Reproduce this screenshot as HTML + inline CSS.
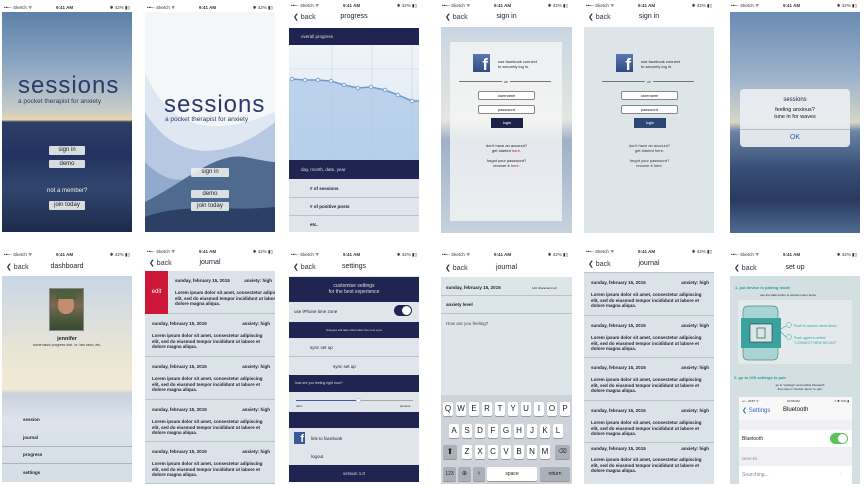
<!DOCTYPE html>
<html><head><meta charset="utf-8"><style>
*{margin:0;padding:0;box-sizing:border-box}
body{width:867px;height:486px;background:#fff;position:relative;overflow:hidden;font-family:"Liberation Sans",sans-serif;color:#222}
.a{position:absolute}
.sb{position:absolute;height:10px;font-size:4.5px;color:#333;white-space:nowrap}
.sb span{position:absolute;top:2px}
.nav{position:absolute;height:16px;background:#fff;font-size:7px;color:#334}
.nav .bk{position:absolute;left:4px;top:3px}
.nav .tt{position:absolute;left:0;right:0;top:3px;text-align:center;color:#223}
.dk{position:absolute;background:#1f2550;color:#ddd;font-size:4.5px}
.btn{position:absolute;background:rgba(235,238,235,.9);font-size:6px;text-align:center;color:#223;border-radius:1px;line-height:9px}
.t{position:absolute;white-space:nowrap}
.ent{position:absolute;left:0;right:0;border-bottom:1px solid #b9c3c8;font-size:4.5px;font-weight:bold;color:#223}
.ent .d{position:absolute;left:7px;top:7px}
.ent .x{position:absolute;right:5px;top:7px}
.ent .b{position:absolute;left:7px;top:19px;right:4px;line-height:5.5px;font-weight:bold}
.row{position:absolute;left:0;right:0;font-size:4.5px;font-weight:bold;color:#223}
.key{position:absolute;width:10px;height:14px;background:#fff;border-radius:2px;font-size:8px;text-align:center;line-height:14px;color:#222;box-shadow:0 1px 0 #999}
</style></head><body>

<div class="sb" style="left:4px;top:3px;width:128px"><span style="left:0">•••◦◦ Sketch ᯤ</span><span style="left:52px;font-weight:bold">9:41 AM</span><span style="right:2px">✱ 42% ▮▯</span></div>
<div class="sb" style="left:147px;top:3px;width:128px"><span style="left:0">•••◦◦ Sketch ᯤ</span><span style="left:52px;font-weight:bold">9:41 AM</span><span style="right:2px">✱ 42% ▮▯</span></div>
<div class="sb" style="left:291px;top:1px;width:128px"><span style="left:0">•••◦◦ Sketch ᯤ</span><span style="left:52px;font-weight:bold">9:41 AM</span><span style="right:2px">✱ 42% ▮▯</span></div>
<div class="sb" style="left:442px;top:1px;width:128px"><span style="left:0">•••◦◦ Sketch ᯤ</span><span style="left:52px;font-weight:bold">9:41 AM</span><span style="right:2px">✱ 42% ▮▯</span></div>
<div class="sb" style="left:586px;top:1px;width:128px"><span style="left:0">•••◦◦ Sketch ᯤ</span><span style="left:52px;font-weight:bold">9:41 AM</span><span style="right:2px">✱ 42% ▮▯</span></div>
<div class="sb" style="left:731px;top:1px;width:128px"><span style="left:0">•••◦◦ Sketch ᯤ</span><span style="left:52px;font-weight:bold">9:41 AM</span><span style="right:2px">✱ 42% ▮▯</span></div>

<div class="a" style="left:2px;top:12px;width:130px;height:220px;background:linear-gradient(#5c7fa8 0%,#8fa9c4 25%,#c8ccc8 45%,#e8d6a8 49%,#2d3f66 50%,#233260 65%,#31466e 80%,#1d2a4c 100%)"></div>
<div class="t" style="left:18px;top:72px;font-size:24px;color:#2b3a68;letter-spacing:1px">sessions</div>
<div class="t" style="left:18px;top:98px;font-size:6.5px;color:#2b3a68">a pocket therapist for anxiety</div>
<div class="btn" style="left:49px;top:146px;width:36px;height:9px">sign in</div>
<div class="btn" style="left:49px;top:160px;width:36px;height:8px;line-height:8px">demo</div>
<div class="t" style="left:47px;top:188px;font-size:6px;color:#eee">not a member?</div>
<div class="btn" style="left:49px;top:201px;width:36px;height:9px">join today</div>

<div class="a" style="left:145px;top:12px;width:130px;height:220px;background:#f4f6f8;overflow:hidden">
<svg width="130" height="220" viewBox="0 0 130 220"><path d="M0 60 C20 110 60 130 130 100 L130 220 L0 220Z" fill="#dfe7f3"/><path d="M0 100 C30 150 80 150 130 110 L130 220 L0 220Z" fill="#b7c8e3"/><path d="M0 150 C40 190 60 150 90 150 C110 150 120 160 130 170 L130 220 L0 220Z" fill="#90a9cc"/><path d="M0 190 C40 170 70 140 100 145 C115 148 125 150 130 150 L130 220 L0 220Z" fill="#4e6a8e"/><path d="M0 205 C40 190 80 200 130 195 L130 220 L0 220Z" fill="#2c3f64"/></svg></div>
<div class="t" style="left:164px;top:91px;font-size:24px;color:#2b3a68;letter-spacing:1px">sessions</div>
<div class="t" style="left:165px;top:116px;font-size:6.5px;color:#2b3a68">a pocket therapist for anxiety</div>
<div class="btn" style="left:191px;top:168px;width:38px;height:9px">sign in</div>
<div class="btn" style="left:191px;top:190px;width:38px;height:8px;line-height:8px">demo</div>
<div class="btn" style="left:191px;top:202px;width:38px;height:9px">join today</div>

<div class="nav" style="left:289px;top:10px;width:130px"><span class="bk">❮ back</span><span class="tt">progress</span></div>
<div class="dk" style="left:289px;top:28px;width:130px;height:17px;padding:6px 12px">overall progress</div>
<div class="a" style="left:289px;top:45px;width:130px;height:115px;background:linear-gradient(#f0f4f9,#e4ecf5 50%,#d6e2ee 100%)">
<svg width="130" height="115"><g stroke="#c8d4e2" stroke-width=".6"><line x1="43" y1="0" x2="43" y2="115"/><line x1="83" y1="0" x2="83" y2="115"/><line x1="123" y1="0" x2="123" y2="115"/><line x1="0" y1="24" x2="130" y2="24"/><line x1="0" y1="55" x2="130" y2="55"/><line x1="0" y1="85" x2="130" y2="85"/></g><path d="M3 34 L16 35 L29 35 L42 36 L55 40 L69 43 L82 42 L96 45 L109 50 L123 56 L130 56 L130 115 L0 115 L0 34Z" fill="#a9c6e8" opacity=".7"/><polyline points="3,34 16,35 29,35 42,36 55,40 69,43 82,42 96,45 109,50 123,56 130,56" fill="none" stroke="#6f9acc" stroke-width="1.5"/><g fill="#eef" stroke="#6f9acc" stroke-width=".8"><circle cx="3" cy="34" r="1.8"/><circle cx="16" cy="35" r="1.8"/><circle cx="29" cy="35" r="1.8"/><circle cx="42" cy="36" r="1.8"/><circle cx="55" cy="40" r="1.8"/><circle cx="69" cy="43" r="1.8"/><circle cx="82" cy="42" r="1.8"/><circle cx="96" cy="45" r="1.8"/><circle cx="109" cy="50" r="1.8"/><circle cx="123" cy="56" r="1.8"/></g></svg></div>
<div class="dk" style="left:289px;top:160px;width:130px;height:19px;padding:7px 12px">day, month, date, year</div>
<div class="a" style="left:289px;top:179px;width:130px;height:53px;background:#dfe5ea"></div>
<div class="row" style="left:310px;top:186px">&#35; of sessions</div>
<div class="row" style="left:310px;top:204px">&#35; of positive posts</div>
<div class="row" style="left:310px;top:222px">etc.</div>
<div class="a" style="left:289px;top:197px;width:130px;height:1px;background:#b8c2ca"></div>
<div class="a" style="left:289px;top:215px;width:130px;height:1px;background:#b8c2ca"></div>

<div class="nav" style="left:441px;top:10px;width:131px"><span class="bk">❮ back</span><span class="tt">sign in</span></div>
<div class="a" style="left:441px;top:27px;width:131px;height:206px;background:linear-gradient(#c8d6e2,#e5e6e0 45%,#9fb0c7 55%,#c7d2de 100%)"></div>
<div class="a" style="left:450px;top:42px;width:112px;height:179px;background:rgba(245,246,246,.8)"></div>
<div class="nav" style="left:584px;top:10px;width:130px"><span class="bk">❮ back</span><span class="tt">sign in</span></div>
<div class="a" style="left:584px;top:27px;width:130px;height:206px;background:#dde5e9"></div>

<div class="a" style="left:473px;top:54px;width:17px;height:18px;background:linear-gradient(#5a77b0,#2d4a85);color:#fff;font-size:17px;font-weight:bold;text-align:right;padding-right:2px;line-height:22px">f</div>
<div class="t" style="left:498px;top:59px;font-size:4px;line-height:5px;color:#222">use facebook connect<br>to securely log in.</div>
<div class="a" style="left:459px;top:81px;width:92px;height:1px;background:#777"></div>
<div class="a" style="left:502px;top:79px;width:8px;height:4px;background:#eee;font-size:4px;text-align:center">or</div>
<div class="a" style="left:478px;top:91px;width:57px;height:9px;background:#fff;border:1px solid #888;border-radius:2px;font-size:4px;text-align:center;line-height:7px">username</div>
<div class="a" style="left:478px;top:105px;width:57px;height:9px;background:#fff;border:1px solid #888;border-radius:2px;font-size:4px;text-align:center;line-height:7px">password</div>
<div class="a" style="left:491px;top:118px;width:32px;height:10px;background:#1d2348;color:#fff;font-size:4px;text-align:center;line-height:9px">login</div>
<div class="t" style="left:484px;top:143px;font-size:4px;line-height:5px;text-align:center;width:45px">don't have an account?<br>get started <span style="color:#a0138a">here.</span></div>
<div class="t" style="left:484px;top:158px;font-size:4px;line-height:5px;text-align:center;width:45px">forgot your password?<br>recover it <span style="color:#a0138a">here.</span></div>

<div class="a" style="left:616px;top:54px;width:17px;height:18px;background:linear-gradient(#5a77b0,#2d4a85);color:#fff;font-size:17px;font-weight:bold;text-align:right;padding-right:2px;line-height:22px">f</div>
<div class="t" style="left:641px;top:59px;font-size:4px;line-height:5px;color:#222">use facebook connect<br>to securely log in.</div>
<div class="a" style="left:602px;top:81px;width:92px;height:1px;background:#777"></div>
<div class="a" style="left:645px;top:79px;width:8px;height:4px;background:#dde5e9;font-size:4px;text-align:center">or</div>
<div class="a" style="left:621px;top:91px;width:57px;height:9px;background:#fff;border:1px solid #888;border-radius:2px;font-size:4px;text-align:center;line-height:7px">username</div>
<div class="a" style="left:621px;top:105px;width:57px;height:9px;background:#fff;border:1px solid #888;border-radius:2px;font-size:4px;text-align:center;line-height:7px">password</div>
<div class="a" style="left:634px;top:118px;width:32px;height:10px;background:#2d4774;color:#fff;font-size:4px;text-align:center;line-height:9px">login</div>
<div class="t" style="left:627px;top:143px;font-size:4px;line-height:5px;text-align:center;width:45px;color:#334">don't have an account?<br>get started here.</div>
<div class="t" style="left:627px;top:158px;font-size:4px;line-height:5px;text-align:center;width:45px;color:#334">forgot your password?<br>recover it here.</div>

<div class="a" style="left:730px;top:12px;width:130px;height:221px;background:linear-gradient(#6a8bb3 0%,#9db3cc 30%,#d7d6c6 50%,#6c84a6 54%,#3a5078 70%,#2a3a60 85%,#4f6a92 100%)"></div>
<div class="a" style="left:740px;top:89px;width:110px;height:58px;background:rgba(235,238,242,.93);border-radius:4px"></div>
<div class="t" style="left:740px;top:97px;width:110px;text-align:center;font-size:6px;color:#223">sessions</div>
<div class="t" style="left:740px;top:107px;width:110px;text-align:center;font-size:5.5px;line-height:7px;color:#111">feeling anxious?<br>tune in for waves</div>
<div class="a" style="left:740px;top:129px;width:110px;height:1px;background:#bbb"></div>
<div class="t" style="left:740px;top:134px;width:110px;text-align:center;font-size:7px;color:#2a5aa8">OK</div>

<div class="sb" style="left:4px;top:250px;width:128px"><span style="left:0">•••◦◦ Sketch ᯤ</span><span style="left:52px;font-weight:bold">9:41 AM</span><span style="right:2px">✱ 42% ▮▯</span></div>
<div class="sb" style="left:147px;top:247px;width:128px"><span style="left:0">•••◦◦ Sketch ᯤ</span><span style="left:52px;font-weight:bold">9:41 AM</span><span style="right:2px">✱ 42% ▮▯</span></div>
<div class="sb" style="left:291px;top:250px;width:128px"><span style="left:0">•••◦◦ Sketch ᯤ</span><span style="left:52px;font-weight:bold">9:41 AM</span><span style="right:2px">✱ 42% ▮▯</span></div>
<div class="sb" style="left:442px;top:250px;width:128px"><span style="left:0">•••◦◦ Sketch ᯤ</span><span style="left:52px;font-weight:bold">9:41 AM</span><span style="right:2px">✱ 42% ▮▯</span></div>
<div class="sb" style="left:586px;top:247px;width:128px"><span style="left:0">•••◦◦ Sketch ᯤ</span><span style="left:52px;font-weight:bold">9:41 AM</span><span style="right:2px">✱ 42% ▮▯</span></div>
<div class="sb" style="left:731px;top:250px;width:128px"><span style="left:0">•••◦◦ Sketch ᯤ</span><span style="left:52px;font-weight:bold">9:41 AM</span><span style="right:2px">✱ 42% ▮▯</span></div>

<div class="nav" style="left:2px;top:260px;width:130px"><span class="bk">❮ back</span><span class="tt">dashboard</span></div>
<div class="a" style="left:2px;top:276px;width:130px;height:206px;background:linear-gradient(#c9d6e6 0%,#ebe6d4 40%,#f0e9d6 55%,#c9d1dc 57%,#dde3ea 70%,#d5dde5 100%)"></div>
<div class="a" style="left:49px;top:288px;width:35px;height:43px;background:linear-gradient(#4d5a40,#7a6a50 40%,#4f5a3e 70%,#3a4a30);border:1px solid #888"></div>
<div class="a" style="left:58px;top:296px;width:16px;height:18px;background:#c28c6e;border-radius:40% 40% 45% 45%"></div>
<div class="a" style="left:56px;top:292px;width:20px;height:7px;background:#4f6040;border-radius:3px 3px 0 0"></div>
<div class="t" style="left:2px;top:336px;width:130px;text-align:center;font-size:5.5px;font-weight:bold;color:#223">jennifer</div>
<div class="t" style="left:2px;top:343px;width:130px;text-align:center;font-size:3.5px;color:#333">some basic progress stat. i.e. last used, etc.</div>
<div class="row" style="left:23px;top:417px">session</div>
<div class="row" style="left:23px;top:435px">journal</div>
<div class="row" style="left:23px;top:452px">progress</div>
<div class="row" style="left:23px;top:470px">settings</div>
<div class="a" style="left:2px;top:446px;width:130px;height:1px;background:#aab4bd"></div>
<div class="a" style="left:2px;top:463px;width:130px;height:1px;background:#aab4bd"></div>

<div class="nav" style="left:145px;top:256px;width:130px"><span class="bk">❮ back</span><span class="tt">journal</span></div>
<div class="a" style="left:145px;top:271px;width:130px;height:213px;background:#dbe3e8;overflow:hidden">
<div class="a" style="left:0;top:0;width:23px;height:43px;background:#cc1738;color:#fff;font-size:6px;text-align:center;line-height:43px">edit</div>
<div class="ent" style="top:0;height:43px;left:23px;right:-20px"><span class="d">sunday, february 15, 2015</span><span class="x" style="right:23px">anxiety: high</span><span class="b">Lorem ipsum dolor sit amet, consectetur adipiscing elit, sed do eiusmod tempor incididunt ut labore et dolore magna aliqua.</span></div>
<div class="ent" style="top:43px;height:43px"><span class="d">sunday, february 15, 2015</span><span class="x">anxiety: high</span><span class="b">Lorem ipsum dolor sit amet, consectetur adipiscing elit, sed do eiusmod tempor incididunt ut labore et dolore magna aliqua.</span></div>
<div class="ent" style="top:86px;height:43px"><span class="d">sunday, february 15, 2015</span><span class="x">anxiety: high</span><span class="b">Lorem ipsum dolor sit amet, consectetur adipiscing elit, sed do eiusmod tempor incididunt ut labore et dolore magna aliqua.</span></div>
<div class="ent" style="top:129px;height:42px"><span class="d">sunday, february 15, 2015</span><span class="x">anxiety: high</span><span class="b">Lorem ipsum dolor sit amet, consectetur adipiscing elit, sed do eiusmod tempor incididunt ut labore et dolore magna aliqua.</span></div>
<div class="ent" style="top:171px;height:42px"><span class="d">sunday, february 15, 2015</span><span class="x">anxiety: high</span><span class="b">Lorem ipsum dolor sit amet, consectetur adipiscing elit, sed do eiusmod tempor incididunt ut labore et dolore magna aliqua.</span></div>
</div>

<div class="nav" style="left:289px;top:260px;width:130px"><span class="bk">❮ back</span><span class="tt">settings</span></div>
<div class="a" style="left:289px;top:276px;width:130px;height:206px;background:#dfe5ea"></div>
<div class="dk" style="left:289px;top:277px;width:130px;height:25px;text-align:center;font-size:5px;padding-top:6px;line-height:6px">customise settings<br>for the best experience</div>
<div class="row" style="left:294px;top:309px;font-weight:normal">use iPhone time zone</div>
<div class="a" style="left:394px;top:305px;width:18px;height:11px;background:#1f2550;border-radius:6px"><div class="a" style="right:1px;top:1px;width:9px;height:9px;background:#fff;border-radius:50%"></div></div>
<div class="dk" style="left:289px;top:322px;width:130px;height:16px;text-align:center;font-size:3px;padding-top:6px">changes will take effect after the next sync</div>
<div class="row" style="left:310px;top:345px;font-weight:normal">sync set up</div>
<div class="a" style="left:289px;top:356px;width:130px;height:1px;background:#b8c2ca"></div>
<div class="row" style="left:333px;top:364px;font-weight:normal">sync set up</div>
<div class="dk" style="left:289px;top:375px;width:130px;height:17px;padding:6px 6px;font-size:3.5px">how are you feeling right now?</div>
<div class="a" style="left:296px;top:400px;width:62px;height:1px;background:#3b5f9e"></div>
<div class="a" style="left:358px;top:400px;width:55px;height:1px;background:#aaa"></div>
<div class="a" style="left:356px;top:398px;width:5px;height:5px;background:#fff;border-radius:50%;border:1px solid #ccc"></div>
<div class="t" style="left:296px;top:404px;font-size:3px">calm</div><div class="t" style="left:400px;top:404px;font-size:3px">anxious</div>
<div class="dk" style="left:289px;top:412px;width:130px;height:16px"></div>
<div class="a" style="left:294px;top:432px;width:11px;height:12px;background:#3b5998;color:#fff;font-size:11px;font-weight:bold;text-align:right;padding-right:1px;line-height:14px">f</div>
<div class="row" style="left:311px;top:436px;font-weight:normal">link to facebook</div>
<div class="row" style="left:311px;top:454px;font-weight:normal">logout</div>
<div class="dk" style="left:289px;top:465px;width:130px;height:17px;text-align:center;padding-top:6px">version 1.0</div>

<div class="nav" style="left:441px;top:261px;width:131px"><span class="bk">❮ back</span><span class="tt">journal</span></div>
<div class="a" style="left:441px;top:277px;width:131px;height:118px;background:#dde5e9"></div>
<div class="row" style="left:446px;top:285px">sunday, february 15, 2015</div>
<div class="t" style="left:532px;top:286px;font-size:3px">140 characters left</div>
<div class="a" style="left:441px;top:295px;width:131px;height:1px;background:#b8c2ca"></div>
<div class="row" style="left:446px;top:302px">anxiety level</div>
<div class="a" style="left:441px;top:313px;width:131px;height:1px;background:#b8c2ca"></div>
<div class="t" style="left:446px;top:321px;font-size:4.5px;color:#445">How are you feeling?</div>
<div class="a" style="left:441px;top:395px;width:131px;height:89px;background:#ced3da"></div>
<div class="key" style="left:443px;top:402px">Q</div><div class="key" style="left:456px;top:402px">W</div><div class="key" style="left:469px;top:402px">E</div><div class="key" style="left:482px;top:402px">R</div><div class="key" style="left:495px;top:402px">T</div><div class="key" style="left:508px;top:402px">Y</div><div class="key" style="left:521px;top:402px">U</div><div class="key" style="left:534px;top:402px">I</div><div class="key" style="left:547px;top:402px">O</div><div class="key" style="left:560px;top:402px">P</div>
<div class="key" style="left:449px;top:424px">A</div><div class="key" style="left:462px;top:424px">S</div><div class="key" style="left:475px;top:424px">D</div><div class="key" style="left:488px;top:424px">F</div><div class="key" style="left:501px;top:424px">G</div><div class="key" style="left:514px;top:424px">H</div><div class="key" style="left:527px;top:424px">J</div><div class="key" style="left:540px;top:424px">K</div><div class="key" style="left:553px;top:424px">L</div>
<div class="key" style="left:443px;top:445px;width:14px;background:#a9b0ba">⬆</div><div class="key" style="left:462px;top:445px">Z</div><div class="key" style="left:475px;top:445px">X</div><div class="key" style="left:488px;top:445px">C</div><div class="key" style="left:501px;top:445px">V</div><div class="key" style="left:514px;top:445px">B</div><div class="key" style="left:527px;top:445px">N</div><div class="key" style="left:540px;top:445px">M</div><div class="key" style="left:555px;top:445px;width:15px;background:#a9b0ba;font-size:6px">⌫</div>
<div class="key" style="left:443px;top:467px;width:13px;background:#a9b0ba;font-size:5px">123</div><div class="key" style="left:458px;top:467px;width:13px;background:#a9b0ba;font-size:6px">⊕</div><div class="key" style="left:473px;top:467px;width:12px;background:#a9b0ba;font-size:6px">♀</div><div class="key" style="left:487px;top:467px;width:50px;font-size:5px">space</div><div class="key" style="left:540px;top:467px;width:30px;background:#a9b0ba;font-size:5px">return</div>

<div class="nav" style="left:584px;top:257px;width:130px"><span class="bk">❮ back</span><span class="tt">journal</span></div>
<div class="a" style="left:584px;top:272px;width:130px;height:212px;background:#dbe3e8;overflow:hidden;border-top:1px solid #b9c3c8">
<div class="ent" style="top:0;height:43px"><span class="d">sunday, february 15, 2015</span><span class="x">anxiety: high</span><span class="b">Lorem ipsum dolor sit amet, consectetur adipiscing elit, sed do eiusmod tempor incididunt ut labore et dolore magna aliqua.</span></div>
<div class="ent" style="top:43px;height:42px"><span class="d">sunday, february 15, 2015</span><span class="x">anxiety: high</span><span class="b">Lorem ipsum dolor sit amet, consectetur adipiscing elit, sed do eiusmod tempor incididunt ut labore et dolore magna aliqua.</span></div>
<div class="ent" style="top:85px;height:43px"><span class="d">sunday, february 15, 2015</span><span class="x">anxiety: high</span><span class="b">Lorem ipsum dolor sit amet, consectetur adipiscing elit, sed do eiusmod tempor incididunt ut labore et dolore magna aliqua.</span></div>
<div class="ent" style="top:128px;height:42px"><span class="d">sunday, february 15, 2015</span><span class="x">anxiety: high</span><span class="b">Lorem ipsum dolor sit amet, consectetur adipiscing elit, sed do eiusmod tempor incididunt ut labore et dolore magna aliqua.</span></div>
<div class="ent" style="top:170px;height:42px"><span class="d" style="top:3px">sunday, february 15, 2015</span><span class="x" style="top:3px">anxiety: high</span><span class="b" style="top:14px">Lorem ipsum dolor sit amet, consectetur adipiscing elit, sed do eiusmod tempor incididunt ut labore et dolore magna aliqua.</span></div>
</div>

<div class="nav" style="left:730px;top:261px;width:130px"><span class="bk">❮ back</span><span class="tt">set up</span></div>
<div class="a" style="left:730px;top:276px;width:130px;height:208px;background:#d3dfe1"></div>
<div class="t" style="left:735px;top:285px;font-size:4px;font-weight:bold;color:#2a9aa0">1. put device in pairing mode</div>
<div class="t" style="left:760px;top:293px;font-size:3px;color:#223">use the slide button to access menu items.</div>
<div class="a" style="left:738px;top:300px;width:114px;height:64px;background:#e4eaec"></div>
<svg class="a" style="left:740px;top:304px" width="110" height="58"><path d="M8 2 L33 2 Q38 2 38 8 L38 50 Q38 56 33 56 L8 56 Q3 56 3 50 L3 8 Q3 2 8 2Z" fill="#a9d4d4" stroke="#4a8a8c" stroke-width=".7"/><rect x="1" y="14" width="40" height="30" fill="#3aa3a0"/><rect x="10" y="20" width="22" height="18" fill="#d7e7e7" stroke="#333" stroke-width=".6"/><rect x="17" y="24" width="8" height="10" fill="none" stroke="#333" stroke-width=".6"/><path d="M41 25 L46 22 M41 28 L46 33" stroke="#3aa3a0" stroke-width=".6"/><circle cx="49" cy="21" r="2.5" fill="none" stroke="#3aa3a0" stroke-width=".5"/><circle cx="49" cy="33" r="2.5" fill="none" stroke="#3aa3a0" stroke-width=".5"/><text x="54" y="23" font-size="3.5" fill="#3aa3a0" font-family="Liberation Sans">Push to access menu items</text><text x="54" y="35" font-size="3.5" fill="#3aa3a0" font-family="Liberation Sans">Push again to select</text><text x="54" y="40" font-size="3.5" fill="#3aa3a0" font-family="Liberation Sans">"CONNECT NEW DEVICE"</text></svg>
<div class="t" style="left:734px;top:375px;font-size:4px;font-weight:bold;color:#2a9aa0">2. go to iOS settings to pair</div>
<div class="t" style="left:760px;top:383px;font-size:3px;line-height:4px;text-align:center;width:80px;color:#223">go to "settings" and enable bluetooth<br>then tap on "device name" to pair.</div>
<div class="a" style="left:739px;top:397px;width:113px;height:87px;background:#efeff4"></div>
<div class="a" style="left:739px;top:397px;width:113px;height:23px;background:#f8f8f8;font-size:3px">
<span class="a" style="left:3px;top:2px">•••◦◦ AT&amp;T ᯤ</span><span class="a" style="left:48px;top:2px">10:58 AM</span><span class="a" style="right:3px;top:2px">➚ ✱ 72% ▮</span>
<span class="a" style="left:3px;top:10px;font-size:6px;color:#2a6ad0">❮ Settings</span><span class="a" style="left:44px;top:10px;font-size:6px;color:#111">Bluetooth</span></div>
<div class="a" style="left:739px;top:430px;width:113px;height:17px;background:#fff;font-size:5px;padding:6px 3px">Bluetooth</div>
<div class="a" style="left:830px;top:433px;width:18px;height:11px;background:#5cc25c;border-radius:6px"><div class="a" style="right:1px;top:1px;width:9px;height:9px;background:#fff;border-radius:50%"></div></div>
<div class="t" style="left:742px;top:457px;font-size:3.5px;color:#777">DEVICES</div>
<div class="a" style="left:739px;top:466px;width:113px;height:18px;background:#fff;font-size:5px;padding:6px 3px;color:#888">Searching...</div>
<div class="t" style="left:840px;top:471px;font-size:5px;color:#999">◌</div>
</body></html>
